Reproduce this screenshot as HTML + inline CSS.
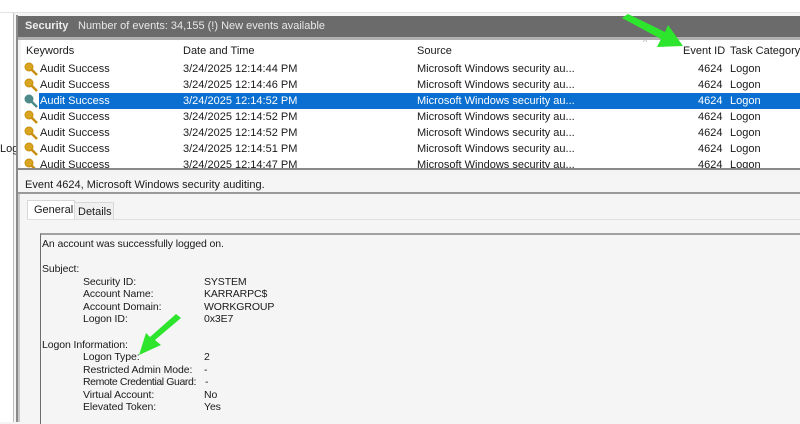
<!DOCTYPE html>
<html><head><style>
body{margin:0;width:800px;height:422px;overflow:hidden;background:#f5f5f5;font-family:"Liberation Sans",sans-serif;font-size:11px;color:#1a1a1a;position:relative}
.a{position:absolute}
.r{position:absolute;left:21px;width:779px;height:16px;line-height:16px;white-space:nowrap;overflow:hidden;background:#fff}
.r span{position:absolute;top:0}
.c1{left:19px}.c2{left:162px}.c3{left:396px}.c4{left:677px}.c5{left:709px}
.sel{background:#fff}
.selbar{position:absolute;left:18px;right:0;top:0;height:16px;background:#0a6fd0}
.sel span{color:#fff}
.k{position:absolute;left:3px;top:1px}
.d span{position:absolute;white-space:nowrap;font-size:10.5px;letter-spacing:-0.1px}
</style></head><body>
<div class="a" style="left:0;top:0;width:800px;height:12px;background:#fff;border-bottom:1px solid #e2e2e2"></div>
<div class="a" style="left:0;top:13px;width:13px;height:409px;background:#fff;border-right:1px solid #bdbdbd"></div>
<div class="a" style="left:0;top:143px">Log</div>
<div class="a" style="left:16px;top:15px;width:2px;height:407px;background:#8a8a8a"></div>
<div class="a" style="left:18px;top:16px;width:782px;height:21px;background:#6b6b6b;color:#e8e8e8;line-height:21px">
<b style="position:absolute;left:7px;color:#eee">Security</b><span style="position:absolute;left:60px">Number of events: 34,155 (!) New events available</span></div>
<div class="a" style="left:18px;top:37px;width:782px;height:3px;background:#b0b0b0"></div>
<div class="a" style="left:21px;top:40px;width:779px;height:128px;background:#fff"></div>
<div class="r" style="top:43px"><span style="left:5px">Keywords</span><span class="c2">Date and Time</span><span class="c3">Source</span><span style="left:662px">Event ID</span><span class="c5">Task Category</span></div>
<div class="a" style="left:643px;top:37px;color:#aaa;font-size:9px">^</div>

<div class="r" style="top:61px"><span class="c1">Audit Success</span><span class="c2">3/24/2025 12:14:44 PM</span><span class="c3">Microsoft Windows security au...</span><span class="c4">4624</span><span class="c5">Logon</span></div>
<div class="r" style="top:77px"><span class="c1">Audit Success</span><span class="c2">3/24/2025 12:14:46 PM</span><span class="c3">Microsoft Windows security au...</span><span class="c4">4624</span><span class="c5">Logon</span></div>
<div class="r sel" style="top:93px"><div class="selbar"></div><span class="c1">Audit Success</span><span class="c2">3/24/2025 12:14:52 PM</span><span class="c3">Microsoft Windows security au...</span><span class="c4">4624</span><span class="c5">Logon</span></div>
<div class="r" style="top:109px"><span class="c1">Audit Success</span><span class="c2">3/24/2025 12:14:52 PM</span><span class="c3">Microsoft Windows security au...</span><span class="c4">4624</span><span class="c5">Logon</span></div>
<div class="r" style="top:125px"><span class="c1">Audit Success</span><span class="c2">3/24/2025 12:14:52 PM</span><span class="c3">Microsoft Windows security au...</span><span class="c4">4624</span><span class="c5">Logon</span></div>
<div class="r" style="top:141px"><span class="c1">Audit Success</span><span class="c2">3/24/2025 12:14:51 PM</span><span class="c3">Microsoft Windows security au...</span><span class="c4">4624</span><span class="c5">Logon</span></div>
<div class="r" style="top:157px;height:11px"><span class="c1">Audit Success</span><span class="c2">3/24/2025 12:14:47 PM</span><span class="c3">Microsoft Windows security au...</span><span class="c4">4624</span><span class="c5">Logon</span></div>

<svg class="a" style="left:24px;top:61px" width="14" height="107">
<defs><g id="ky"><circle cx="5" cy="5" r="4"/><line x1="7" y1="7" x2="13" y2="13" stroke-width="2.5"/></g></defs>
<g fill="#d9a520" stroke="#c98f10"><use href="#ky" y="1"/><use href="#ky" y="17"/><use href="#ky" y="49"/><use href="#ky" y="65"/><use href="#ky" y="81"/><use href="#ky" y="97"/></g>
<g fill="#4e8a8a" stroke="#4e8a8a"><use href="#ky" y="33"/></g>
</svg>

<div class="a" style="left:18px;top:168px;width:782px;height:2px;background:#8a8a8a"></div>
<div class="a" style="left:18px;top:170px;width:782px;height:4px;background:#f3f3f3"></div>
<div class="a" style="left:25px;top:179px">Event 4624, Microsoft Windows security auditing.</div>
<div class="a" style="left:18px;top:192px;width:782px;height:2px;background:#9a9a9a"></div>
<div class="a" style="left:18px;top:194px;width:2px;height:228px;background:#c8c8c8"></div>
<div class="a" style="left:27px;top:200px;width:46px;height:19px;background:#fff;border:1px solid #d8d8d8;border-bottom:none"></div>
<div class="a" style="left:34px;top:204px">General</div>
<div class="a" style="left:74px;top:202px;width:38px;height:17px;border:1px solid #d8d8d8;border-bottom:none;background:#f0f0f0"></div>
<div class="a" style="left:78px;top:206px">Details</div>
<div class="a" style="left:27px;top:219px;width:773px;height:1px;background:#e0e0e0"></div>
<div class="a" style="left:40px;top:233px;width:760px;height:189px;border-left:1px solid #6d6d6d;border-top:2px solid #a0a0a0;background:#f5f5f5"></div>
<div class="d" style="position:absolute;left:42px;top:0">
<span style="top:238px">An account was successfully logged on.</span>
<span style="top:263px">Subject:</span>
<span style="left:41px;top:276px">Security ID:</span><span style="left:162px;top:276px">SYSTEM</span>
<span style="left:41px;top:288px">Account Name:</span><span style="left:162px;top:288px">KARRARPC$</span>
<span style="left:41px;top:301px">Account Domain:</span><span style="left:162px;top:301px">WORKGROUP</span>
<span style="left:41px;top:313px">Logon ID:</span><span style="left:162px;top:313px">0x3E7</span>
<span style="top:339px">Logon Information:</span>
<span style="left:41px;top:351px">Logon Type:</span><span style="left:162px;top:351px">2</span>
<span style="left:41px;top:364px">Restricted Admin Mode:</span><span style="left:162px;top:364px">-</span>
<span style="left:41px;top:376px;letter-spacing:-0.4px">Remote Credential Guard:</span><span style="left:163px;top:376px">-</span>
<span style="left:41px;top:389px">Virtual Account:</span><span style="left:162px;top:389px">No</span>
<span style="left:41px;top:401px">Elevated Token:</span><span style="left:162px;top:401px">Yes</span>
</div>
<svg class="a" style="left:0;top:0" width="800" height="422">
<polygon points="622,18 628,14 665,32 668,25 683,46 657,47 661,39" fill="#2ee52e"/>
<polygon points="176,314 181,318 155,340 161,345 139,355 146,333 150,337" fill="#2ee52e"/>
</svg>
</body></html>
